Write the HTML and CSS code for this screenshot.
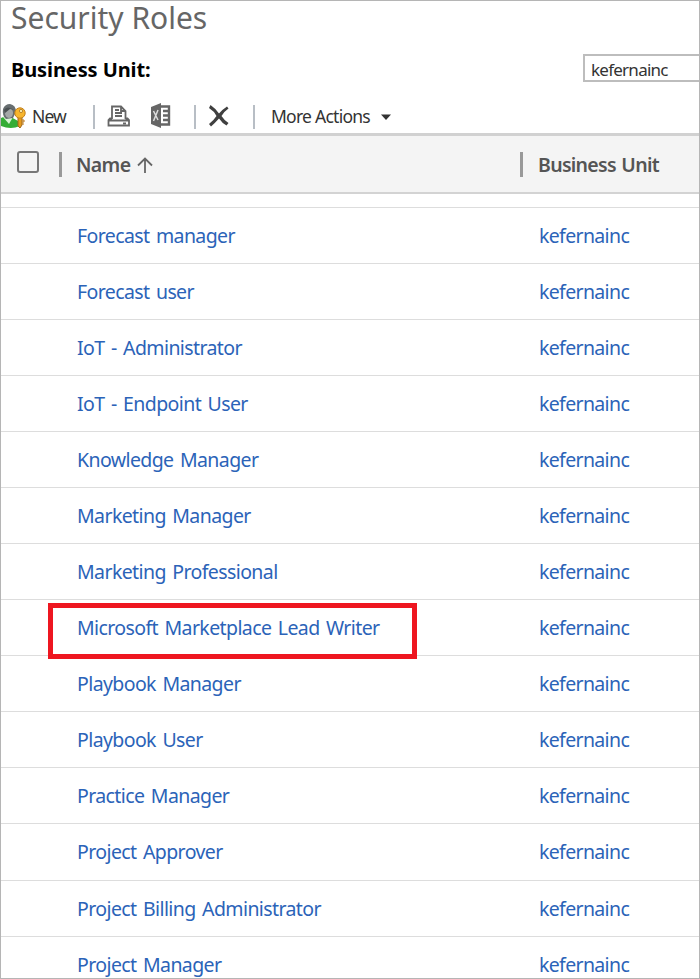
FILE: index.html
```html
<!DOCTYPE html>
<html lang="en">
<head>
<meta charset="utf-8">
<title>Security Roles</title>
<link rel="stylesheet" href="styles.css">
</head>
<body>
<main class="window">
  <h1 class="title"><span>Security Roles</span></h1>
  <div class="filter">
    <span class="filter-label">Business Unit:</span>
    <div class="filter-field"><span>kefernainc</span></div>
  </div>
  <div class="toolbar">
    <svg class="icon-new" width="25" height="27" viewBox="0 0 25 27">
      <path d="M0 15 Q5 12 10 14 L17 18 L19 23 Q10 27 0 23Z" fill="#35ad36"/>
      <path d="M2 14 L8 21 L12 14Z" fill="#d9f5d5"/>
      <path d="M2 6 Q4 1 9 1 Q15 2 15 9 L12 15 L5 16 Q1 13 2 6Z" fill="#676e70"/>
      <ellipse cx="8" cy="10" rx="4" ry="5" fill="#a4a8a8"/>
      <path d="M3 7 Q6 2 13 7 L9 6 L4 10Z" fill="#4a5052"/>
      <path d="M17 13 H21 V22 L19 25 L17 23Z" fill="#e89b1c" stroke="#9d661b"/>
      <circle cx="19" cy="10" r="5.2" fill="#f7b52d" stroke="#c4811b"/>
      <circle cx="20" cy="8" r="1.6" fill="#fff0b0" stroke="#9d661b" stroke-width=".7"/>
      <path d="M21 17h2v2h-2M21 21h2" fill="none" stroke="#ba781b"/>
    </svg>
    <span class="new">New</span>
    <i class="separator sep-a"></i>
    <svg class="icon-print" width="24" height="22" viewBox="0 0 24 22" fill="none" stroke="#666" stroke-width="1.8">
      <path d="M5 14V1.5H14L18.5 6V14M14 1.5V6H18.5M8 5H12M8 8H15M8 11H15"/>
      <path d="M5 13.5H3L1.5 15V20.5H22V15L20.5 13.5H18.5M2 15.5H22M16 18.3H19"/>
    </svg>
    <svg class="icon-excel" width="20" height="25" viewBox="0 0 20 25">
      <path d="M0 4L10 0V25L0 21Z" fill="#666"/>
      <path d="M2.5 8L7 17M7 7L2.5 18" stroke="#ddd" stroke-width="1.5"/>
      <path d="M10 3.5H18V21.5H10M12 8H18M12 12.5H18M12 17H18" fill="none" stroke="#666" stroke-width="2.4"/>
    </svg>
    <i class="separator sep-b"></i>
    <svg class="icon-delete" width="20" height="22" viewBox="0 0 20 22">
      <path d="M1.5 0Q6 3 10 8.5Q14 4 18 1.5L19.5 3.5Q14.500 7 12.500 11Q15 15 19.500 18L17.500 20.500Q13 18 10 13.500Q6 18 2 21.500L0 19Q5 15 7.500 11Q5 6 0 3Z" fill="#404040"/>
    </svg>
    <i class="separator sep-c"></i>
    <span class="more">More Actions</span>
    <svg class="caret" width="10" height="6" viewBox="0 0 10 6"><path d="M0 .5H10L5 6Z" fill="#333"/></svg>
  </div>
  <div class="grid-head">
    <span class="checkbox"></span>
    <i class="divider"></i>
    <span class="head-name">Name</span>
    <svg class="sort" width="16" height="17" viewBox="0 0 16 17" fill="none" stroke="#666" stroke-width="1.8"><path d="M8 16V2M1 8.5L8 1.5L15 8.5"/></svg>
    <i class="divider divider-unit"></i>
    <span class="head-unit">Business Unit</span>
  </div>
  <div class="rows">
    <div class="row"><a>Forecast manager</a><a class="unit">kefernainc</a></div>
    <div class="row"><a>Forecast user</a><a class="unit">kefernainc</a></div>
    <div class="row"><a>IoT - Administrator</a><a class="unit">kefernainc</a></div>
    <div class="row"><a>IoT - Endpoint User</a><a class="unit">kefernainc</a></div>
    <div class="row"><a>Knowledge Manager</a><a class="unit">kefernainc</a></div>
    <div class="row"><a>Marketing Manager</a><a class="unit">kefernainc</a></div>
    <div class="row"><a>Marketing Professional</a><a class="unit">kefernainc</a></div>
    <div class="row marked"><a>Microsoft Marketplace Lead Writer</a><a class="unit">kefernainc</a></div>
    <div class="row"><a>Playbook Manager</a><a class="unit">kefernainc</a></div>
    <div class="row"><a>Playbook User</a><a class="unit">kefernainc</a></div>
    <div class="row"><a>Practice Manager</a><a class="unit">kefernainc</a></div>
    <div class="row"><a>Project Approver</a><a class="unit">kefernainc</a></div>
    <div class="row"><a>Project Billing Administrator</a><a class="unit">kefernainc</a></div>
    <div class="row"><a>Project Manager</a><a class="unit">kefernainc</a></div>
  </div>
</main>
</body>
</html>
```
FILE: styles.css
```css
*, *::after { box-sizing: border-box; }
body { margin: 0; background: #fff; font-family: "Noto Sans", "Open Sans", sans-serif; }
.window { width: 700px; height: 979px; border: 1px solid #b5b5b5; overflow: hidden; display: flex; flex-direction: column; }
.window > * { flex-shrink: 0; }
svg { display: block; flex: none; }
span, a { white-space: nowrap; }
.title { margin: 0; height: 53px; padding-left: 10px; font-size: 30px; line-height: 34px; font-weight: 400; color: #666; letter-spacing: 0; }
.filter { height: 44px; display: flex; justify-content: space-between; padding-left: 10px; }
.filter-label { font-size: 20px; line-height: 31px; font-weight: 700; color: #000; letter-spacing: -.1px; }
.filter-field { width: 116px; height: 28px; border: 2px solid #bdbdbd; border-right: 0; padding-left: 6px; font-size: 17px; line-height: 27px; color: #333; letter-spacing: -.75px; }
.toolbar { height: 35px; display: flex; align-items: flex-start; padding-top: 5px; font-size: 17.5px; line-height: 26px; color: #333; }
.new { margin-left: 6px; width: 61px; letter-spacing: -.9px; }
.separator { width: 2px; height: 24px; margin-top: 2px; background: #b8bec5; flex: none; }
.icon-print { margin: 2px 0 0 12px; }
.icon-excel { margin: 0 0 0 20px; }
.sep-b { margin-left: 23px; }
.icon-delete { margin: 2px 0 0 13px; }
.sep-c { margin-left: 24px; }
.more { margin-left: 16px; width: 110px; letter-spacing: -.75px; }
.caret { margin-top: 11px; }
.grid-head { height: 61px; border-top: 3px solid #d1d1d1; border-bottom: 2px solid #d3d3d3; background: #f4f4f4; display: flex; align-items: flex-start; padding-left: 16px; font-size: 19.5px; line-height: 28px; font-weight: 600; color: #555; }
.checkbox { width: 22px; height: 22px; margin-top: 15px; border: 2px solid #777; border-radius: 3px; }
.divider { width: 3px; height: 25px; margin: 16px 0 0 20px; background: #999; }
.head-name { margin: 15px 0 0 14px; width: 54px; letter-spacing: -.65px; }
.sort { margin: 21px 0 0 7px; }
.divider-unit { margin-left: 367px; }
.head-unit { margin: 15px 0 0 15px; letter-spacing: -.7px; word-spacing: 1px; }
.rows { padding-top: 12.6px; }
.row { position: relative; height: 56.08px; border-top: 1px solid #ddd; display: grid; grid-template-columns: 462px 1fr; padding-left: 76px; font-size: 19.5px; line-height: 55px; color: #2b63b8; letter-spacing: -.6px; word-spacing: 2px; }
.unit { letter-spacing: -.65px; }
.marked::after { content: ""; position: absolute; left: 47px; top: 3px; width: 369px; height: 56px; border: 5px solid #ee1620; z-index: 1; }
```
